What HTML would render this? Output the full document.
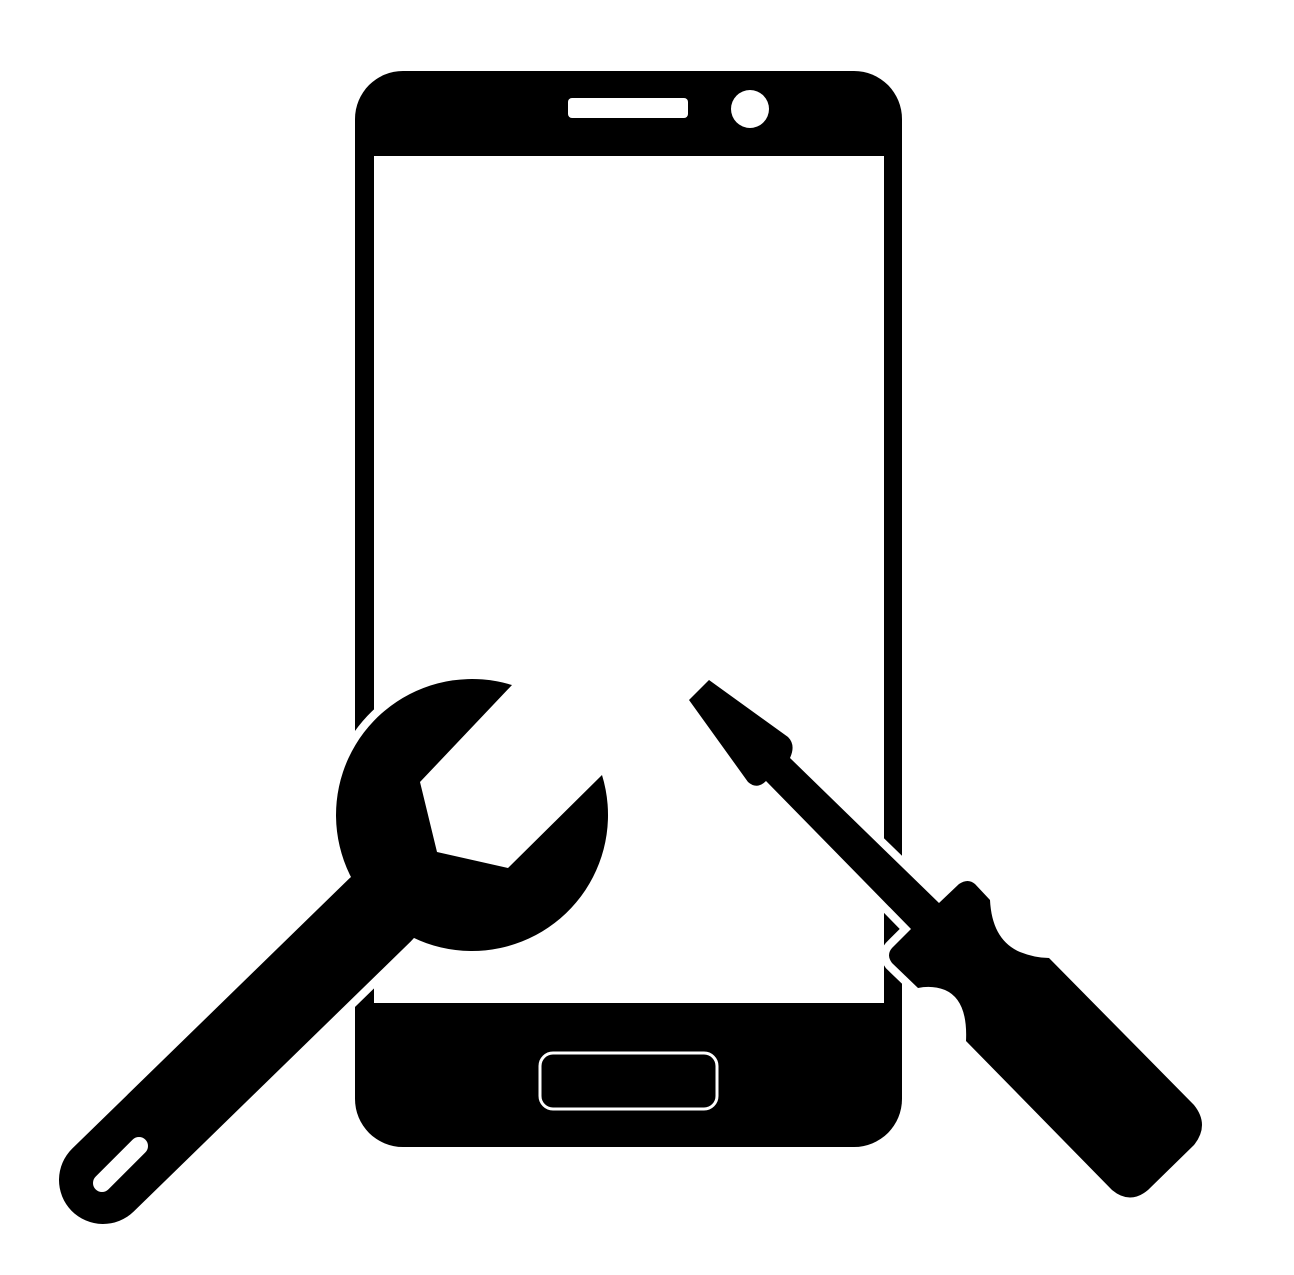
<!DOCTYPE html>
<html><head><meta charset="utf-8"><style>html,body{margin:0;padding:0;background:#fff;}svg{display:block}</style></head>
<body>
<svg width="1294" height="1275" viewBox="0 0 1294 1275" xmlns="http://www.w3.org/2000/svg">
<rect x="0" y="0" width="1294" height="1275" fill="#fff"/>
<!-- phone -->
<rect x="355" y="71" width="547" height="1076" rx="48" fill="#000"/>
<rect x="374" y="156" width="510" height="847" fill="#fff"/>
<rect x="568" y="98" width="120" height="20" rx="4" fill="#fff"/>
<circle cx="750" cy="109" r="19" fill="#fff"/>
<rect x="540" y="1053" width="177" height="56" rx="13" fill="none" stroke="#fff" stroke-width="3"/>

<!-- wrench -->
<g>
  <g stroke="#fff" stroke-width="16" stroke-linejoin="round" fill="#fff">
    <line x1="380" y1="910" x2="103" y2="1180" stroke-width="104" stroke-linecap="round"/>
    <path d="M512,685 L420,782 L437,852 L508,868 L602,775 A136,136 0 1 1 512,685 Z"/>
  </g>
  <line x1="380" y1="910" x2="103" y2="1180" stroke="#000" stroke-width="88" stroke-linecap="round"/>
  <path d="M512,685 L420,782 L437,852 L508,868 L602,775 A136,136 0 1 1 512,685 Z" fill="#000"/>
  <line x1="102" y1="1183" x2="139" y2="1146" stroke="#fff" stroke-width="18" stroke-linecap="round"/>
</g>

<!-- screwdriver -->
<g>
  <path d="M689,700 L709,680 L788,737 Q796,745 790,758 L939,903 L959,884 Q968,878 975,884 L990,900 Q992,940 1020,952 Q1035,958 1049,958 L1194,1105 Q1210,1125 1194,1145 L1148,1190 Q1130,1205 1112,1190 L966,1041 Q968,1000 945,990 Q932,985 918,988 L892,963 Q886,955 892,948 L911,929 L766,781 Q757,790 748,782 Z" fill="#fff" stroke="#fff" stroke-width="16" stroke-linejoin="round"/>
  <path d="M689,700 L709,680 L788,737 Q796,745 790,758 L939,903 L959,884 Q968,878 975,884 L990,900 Q992,940 1020,952 Q1035,958 1049,958 L1194,1105 Q1210,1125 1194,1145 L1148,1190 Q1130,1205 1112,1190 L966,1041 Q968,1000 945,990 Q932,985 918,988 L892,963 Q886,955 892,948 L911,929 L766,781 Q757,790 748,782 Z" fill="#000"/>
</g>
</svg>
</body></html>
